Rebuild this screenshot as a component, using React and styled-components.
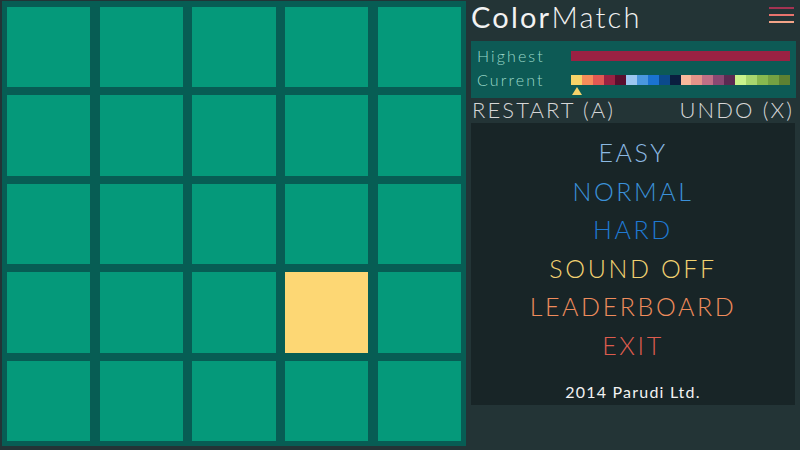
import React from "react";
import styled, { createGlobalStyle } from "styled-components";

const Global = createGlobalStyle`
  html, body { margin: 0; padding: 0; background: #233436; }
  body { width: 800px; height: 450px; overflow: hidden; font-family: Lato, "Open Sans", sans-serif; }
`;

const Page = styled.div`
  width: 800px;
  height: 450px;
  display: flex;
  gap: 5px;
  padding: 1px 4px 0 2px;
  box-sizing: border-box;
  background: #233436;
`;

const Board = styled.div`
  width: 464px;
  height: 445px;
  box-sizing: border-box;
  background: #075d54;
  padding: 6px 5px 5px 5px;
  display: grid;
  grid-template-columns: repeat(5, 1fr);
  grid-template-rows: repeat(5, 1fr);
  column-gap: 9.5px;
  row-gap: 8px;
`;

const Tile = styled.div`
  background: ${(p) => p.$color};
`;

const Side = styled.div`
  flex: 1;
  display: flex;
  flex-direction: column;
`;

const Header = styled.div`
  height: 40px;
  display: flex;
  align-items: flex-start;
  justify-content: space-between;
`;

const Title = styled.div`
  font-size: 29px;
  color: #f2f2f2;
  letter-spacing: 2.2px;
  line-height: 34px;
  margin-top: -1px;
  font-weight: 400;
  span { font-weight: 300; }
`;

const Burger = styled.div`
  width: 25px;
  display: flex;
  flex-direction: column;
  gap: 5px;
  margin-top: 6px;
  margin-right: 2px;
`;

const BurgerLine = styled.div`
  height: 2px;
  background: ${(p) => p.$color};
`;

const Scores = styled.div`
  background: #0d5a55;
  height: 57px;
  box-sizing: border-box;
  padding: 6px 6px 0 6px;
  display: grid;
  grid-template-columns: 94px 1fr;
  grid-auto-rows: 18px;
  align-content: start;
  row-gap: 6px;
  align-items: center;
`;

const Label = styled.div`
  font-size: 16px;
  font-weight: 300;
  color: #9ad8c8;
  letter-spacing: 2.1px;
  line-height: 18px;
`;

const HighBar = styled.div`
  height: 10px;
  background: #9b2143;
`;

const CurrentWrap = styled.div`
  position: relative;
`;

const Strip = styled.div`
  height: 10px;
  display: flex;
`;

const Seg = styled.div`
  flex: 1;
  background: ${(p) => p.$color};
`;

const Marker = styled.div`
  position: absolute;
  left: 1px;
  top: 12px;
  width: 0;
  height: 0;
  border-left: 5px solid transparent;
  border-right: 5px solid transparent;
  border-bottom: 8px solid #f5d26a;
`;

const Actions = styled.div`
  display: flex;
  justify-content: space-between;
  padding: 0 2px 0 1px;
  height: 25px;
  align-items: center;
`;

const Action = styled.div`
  font-size: 22px;
  font-weight: 300;
  color: #d6d6d6;
  letter-spacing: 2.1px;
  line-height: 24px;
  margin-top: -2px;
`;

const Menu = styled.div`
  height: 282px;
  background: #182527;
  display: flex;
  flex-direction: column;
  align-items: center;
  padding-top: 10px;
  box-sizing: border-box;
  margin-right: 1px;
`;

const Item = styled.div`
  font-size: 25px;
  font-weight: 300;
  color: ${(p) => p.$color};
  letter-spacing: 2.6px;
  line-height: 38.5px;
`;

const Copy = styled.div`
  margin-top: 18px;
  font-size: 16px;
  font-weight: 400;
  color: #f2f2f2;
  letter-spacing: 1.2px;
`;

const strip = [
  "#f6d468", "#f68c5a", "#e15953", "#9a2242", "#5a0f2e",
  "#9cc7f0", "#4a98de", "#1a73d1", "#0b4a8c", "#0a1f3f",
  "#f7b89b", "#e49389", "#c06f86", "#8a4872", "#5b2a52",
  "#c9f38b", "#a7d76e", "#88b94f", "#74a142", "#5e8132",
];

const menu = [
  ["EASY", "#8bb9e2"],
  ["NORMAL", "#3b91d9"],
  ["HARD", "#1f79d2"],
  ["SOUND OFF", "#f2d271"],
  ["LEADERBOARD", "#ef8c5c"],
  ["EXIT", "#de5c4e"],
];

export default function App() {
  const tiles = Array.from({ length: 25 }, (_, i) => (i === 18 ? "#fdd774" : "#05997a"));
  return (
    <>
      <Global />
      <Page>
        <Board>
          {tiles.map((c, i) => (
            <Tile key={i} $color={c} />
          ))}
        </Board>
        <Side>
          <Header>
            <Title>
              Color<span>Match</span>
            </Title>
            <Burger>
              <BurgerLine $color="#a33352" />
              <BurgerLine $color="#e7736d" />
              <BurgerLine $color="#f2a488" />
            </Burger>
          </Header>
          <Scores>
            <Label>Highest</Label>
            <HighBar />
            <Label>Current</Label>
            <CurrentWrap>
              <Strip>
                {strip.map((c, i) => (
                  <Seg key={i} $color={c} />
                ))}
              </Strip>
              <Marker />
            </CurrentWrap>
          </Scores>
          <Actions>
            <Action>RESTART (A)</Action>
            <Action>UNDO (X)</Action>
          </Actions>
          <Menu>
            {menu.map(([t, c]) => (
              <Item key={t} $color={c}>
                {t}
              </Item>
            ))}
            <Copy>2014 Parudi Ltd.</Copy>
          </Menu>
        </Side>
      </Page>
    </>
  );
}
